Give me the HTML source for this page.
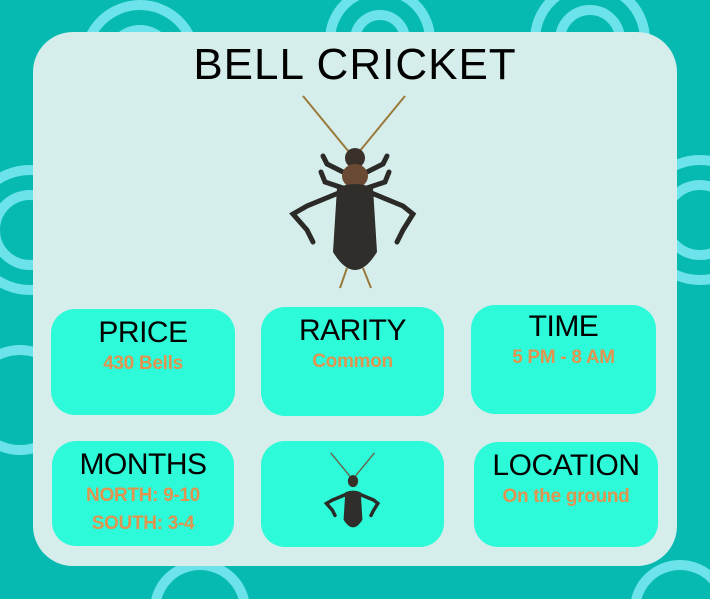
<!DOCTYPE html>
<html style="overflow:hidden"><head><style>
html,body{margin:0;width:710px;height:599px;overflow:hidden}
body{background:#07bab1;font-family:"Liberation Sans",sans-serif;position:relative}
.bg{position:absolute;left:0;top:0}
.card{position:absolute;left:33px;top:32px;width:644px;height:534px;background:#d5eeec;border-radius:40px}
h1{position:absolute;left:0;width:710px;top:40px;margin:0;text-align:center;font-size:44px;font-weight:normal;color:#000;letter-spacing:1px}
.box{position:absolute;background:#2cfad8;border-radius:24px;text-align:center;overflow:hidden}
.box .l{font-size:30px;color:#000;margin-top:7px;line-height:34px;letter-spacing:-0.5px}
.box .v{font-size:19px;color:#e0944f;line-height:28px;font-weight:bold;letter-spacing:-0.3px}
</style></head><body>
<svg class="bg" width="710" height="599" fill="none" stroke="#6ce3ea" stroke-width="10">
<circle cx="140" cy="60" r="55"/><circle cx="140" cy="60" r="30"/>
<circle cx="380" cy="40" r="50"/><circle cx="380" cy="40" r="25"/>
<circle cx="590" cy="40" r="55"/><circle cx="590" cy="40" r="30"/>
<circle cx="30" cy="230" r="60"/><circle cx="30" cy="230" r="35"/>
<circle cx="700" cy="220" r="60"/><circle cx="700" cy="220" r="35"/>
<circle cx="20" cy="400" r="50"/>
<circle cx="200" cy="610" r="45"/><circle cx="680" cy="610" r="45"/>
</svg>
<div class="card"></div>
<h1>BELL CRICKET</h1>
<svg style="position:absolute;left:285px;top:92px" width="140" height="200" viewBox="0 0 140 200">
<g stroke="#9a7a3a" stroke-width="2"><line x1="18" y1="4" x2="64" y2="60"/><line x1="120" y1="4" x2="74" y2="60"/><line x1="62" y1="176" x2="55" y2="196"/><line x1="78" y1="176" x2="86" y2="196"/></g>
<g stroke="#2b2a26" stroke-width="5" stroke-linecap="round" fill="none"><path d="M56 100 L22 114 L8 122 L22 138 L28 150"/><path d="M84 100 L118 114 L128 122 L118 138 L112 150"/><path d="M58 80 L42 72 L38 64"/><path d="M82 80 L98 72 L102 64"/><path d="M58 96 L40 90 L36 80"/><path d="M82 96 L100 90 L104 80"/></g>
<ellipse cx="70" cy="66" rx="10" ry="10" fill="#3a302a"/>
<ellipse cx="70" cy="84" rx="13" ry="12" fill="#6b4a34"/>
<path d="M52 96 Q70 88 88 96 L92 160 Q70 196 48 160 Z" fill="#2f2e2a"/>
</svg>
<div class="box" style="left:51px;top:309px;width:184px;height:106px"><div class="l">PRICE</div><div class="v">430 Bells</div></div>
<div class="box" style="left:261px;top:307px;width:183px;height:109px"><div class="l">RARITY</div><div class="v">Common</div></div>
<div class="box" style="left:471px;top:305px;width:185px;height:109px"><div class="l" style="margin-top:5px">TIME</div><div class="v">5 PM - 8 AM</div></div>
<div class="box" style="left:52px;top:441px;width:182px;height:105px"><div class="l">MONTHS</div><div class="v">NORTH: 9-10<br>SOUTH: 3-4</div></div>
<div class="box" style="left:261px;top:441px;width:183px;height:106px">
<svg style="margin-top:8px" width="60" height="90" viewBox="0 0 140 200"><g stroke="#6a5a3a" stroke-width="3"><line x1="18" y1="4" x2="64" y2="60"/><line x1="120" y1="4" x2="74" y2="60"/></g><g stroke="#2b2a26" stroke-width="8" stroke-linecap="round" fill="none"><path d="M56 100 L22 114 L8 122 L22 138 L28 150"/><path d="M84 100 L118 114 L128 122 L118 138 L112 150"/></g><ellipse cx="70" cy="70" rx="12" ry="14" fill="#3a302a"/><path d="M52 96 Q70 88 88 96 L92 160 Q70 196 48 160 Z" fill="#2f2e2a"/></svg></div>
<div class="box" style="left:474px;top:442px;width:184px;height:105px"><div class="l">LOCATION</div><div class="v">On the ground</div></div>
</body></html>
